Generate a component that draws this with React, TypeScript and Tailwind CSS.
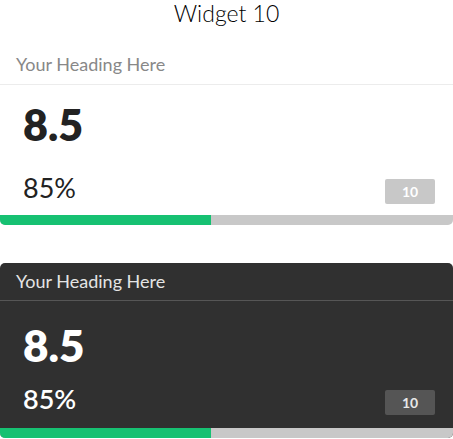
import React from 'react';

type CardProps = {
  dark?: boolean;
};

function ScoreCard({ dark }: CardProps) {
  return (
    <div
      className={
        dark
          ? 'flex flex-col rounded-[5px] bg-[#303030] overflow-hidden'
          : 'flex flex-col rounded-[5px] bg-white overflow-hidden'
      }
    >
      {/* Header */}
      <div
        className={
          dark
            ? 'h-[38px] flex items-center px-4 border-b border-[#565656]'
            : 'h-[40px] flex items-center px-4 border-b border-[#ececec]'
        }
      >
        <span className={dark ? 'text-[18px] text-[#e4e4e4]' : 'text-[18px] text-[#888888]'}>
          Your Heading Here
        </span>
      </div>

      {/* Body */}
      <div className={dark ? 'px-[23px] pt-[18px] pb-[13px]' : 'px-[23px] pt-[15px] pb-[11px]'}>
        <div
          className={
            dark
              ? 'text-[44px] font-extrabold leading-[52px] text-white'
              : 'text-[43px] font-extrabold leading-[50px] text-[#222222]'
          }
        >
          8.5
        </div>
        <div className={dark ? 'mt-[12px] flex items-end justify-between' : 'mt-[22px] flex items-end justify-between'}>
          <span
            className={
              dark
                ? 'text-[27px] font-semibold leading-[32px] text-white'
                : 'text-[27px] leading-[32px] text-[#222222]'
            }
          >
            85%
          </span>
          <span
            className={
              dark
                ? 'mr-[-5px] w-[50px] h-[25px] rounded-[2px] bg-[#555555] text-[#e8e8e8] text-[14px] font-bold flex items-center justify-center'
                : 'mr-[-5px] w-[50px] h-[25px] rounded-[2px] bg-[#c8c8c8] text-white text-[14px] font-bold flex items-center justify-center'
            }
          >
            10
          </span>
        </div>
      </div>

      {/* Progress */}
      <div className="h-[10px] bg-[#c8c8c8] flex">
        <div className="w-[211px] h-full bg-[#16c172]" />
      </div>
    </div>
  );
}

export default function App() {
  return (
    <div className="w-[453px] h-[439px] bg-white overflow-hidden" style={{ fontFamily: 'Lato, "Noto Sans", sans-serif' }}>
      <h1 className="text-center text-[23px] font-light leading-[26px] text-black">Widget 10</h1>
      <div className="mt-[19px]">
        <ScoreCard />
      </div>
      <div className="mt-[38px]">
        <ScoreCard dark />
      </div>
    </div>
  );
}
